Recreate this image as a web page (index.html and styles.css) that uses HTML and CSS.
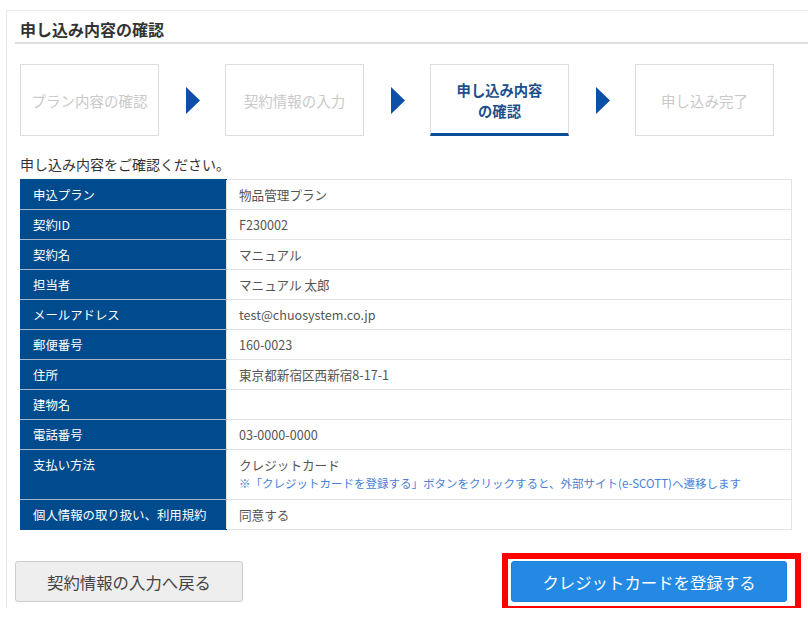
FILE: index.html
```html
<!DOCTYPE html>
<html lang="ja">
<head>
<meta charset="utf-8">
<title>申し込み内容の確認</title>
<link rel="stylesheet" href="styles.css">
</head>
<body>
<div class="panel">
  <h2 class="title">申し込み内容の確認</h2>
  <div class="steps">
    <div class="step">プラン内容の確認</div>
    <div class="arrow"><svg width="14" height="27" viewBox="0 0 14 27"><polygon points="0,0 14,13.5 0,27" fill="#0b4fa6"/></svg></div>
    <div class="step">契約情報の入力</div>
    <div class="arrow"><svg width="14" height="27" viewBox="0 0 14 27"><polygon points="0,0 14,13.5 0,27" fill="#0b4fa6"/></svg></div>
    <div class="step active">申し込み内容<br>の確認</div>
    <div class="arrow"><svg width="14" height="27" viewBox="0 0 14 27"><polygon points="0,0 14,13.5 0,27" fill="#0b4fa6"/></svg></div>
    <div class="step">申し込み完了</div>
  </div>
  <p class="intro">申し込み内容をご確認ください。</p>
  <table class="info">
    <tr><th>申込プラン</th><td>物品管理プラン</td></tr>
    <tr><th>契約ID</th><td>F230002</td></tr>
    <tr><th>契約名</th><td>マニュアル</td></tr>
    <tr><th>担当者</th><td>マニュアル 太郎</td></tr>
    <tr><th>メールアドレス</th><td>test@chuosystem.co.jp</td></tr>
    <tr><th>郵便番号</th><td>160-0023</td></tr>
    <tr><th>住所</th><td>東京都新宿区西新宿8-17-1</td></tr>
    <tr><th>建物名</th><td></td></tr>
    <tr><th>電話番号</th><td>03-0000-0000</td></tr>
    <tr class="tall"><th>支払い方法</th><td>クレジットカード<div class="note">※「クレジットカードを登録する」ボタンをクリックすると、外部サイト(e-SCOTT)へ遷移します</div></td></tr>
    <tr><th>個人情報の取り扱い、利用規約</th><td>同意する</td></tr>
  </table>
  <div class="actions">
    <button class="btn back">契約情報の入力へ戻る</button>
    <div class="highlight"><button class="btn primary">クレジットカードを登録する</button></div>
  </div>
</div>
</body>
</html>
```
FILE: styles.css
```css
html, body {
  margin: 0;
  padding: 0;
  background: #fff;
}
body {
  font-family: "Noto Sans CJK JP", "Noto Sans", sans-serif;
  color: #333;
  overflow: hidden;
}
.panel {
  margin: 10px 0 0 6px;
  height: 597px;
  border-left: 1px solid #e6e6e6;
  border-top: 1px solid #eeeeee;
  padding-left: 8px;
  box-sizing: content-box;
}
.title {
  margin: 0;
  padding: 8px 0 3px 5px;
  font-size: 16px;
  line-height: 20px;
  font-weight: bold;
  color: #333;
  border-bottom: 2px solid #dddddd;
}
.steps {
  display: flex;
  align-items: center;
  margin-top: 20px;
  padding-left: 5px;
}
.step {
  width: 139px;
  height: 72px;
  box-sizing: border-box;
  border: 1px solid #dddddd;
  display: flex;
  align-items: center;
  justify-content: center;
  text-align: center;
  font-size: 14.5px;
  color: #c9c9c9;
}
.step.active {
  color: #1b4f8c;
  font-weight: bold;
  font-size: 14.3px;
  line-height: 21px;
  border-bottom: 3px solid #0d4f96;
  padding-top: 2px;
}
.arrow {
  width: 66px;
  display: flex;
  justify-content: center;
  padding-left: 2px;
  box-sizing: border-box;
}
.arrow svg {
  display: block;
}
.intro {
  margin: 18px 0 5px 5px;
  font-size: 14px;
  line-height: 20px;
  color: #333;
}
.info {
  margin-left: 5px;
  width: 772px;
  border-collapse: collapse;
  font-size: 12.6px;
}
.info th, .info td {
  height: 29px;
  padding: 0 12px;
  line-height: 18px;
  text-align: left;
  vertical-align: middle;
}
.info th {
  width: 181px;
  background: #004b8d;
  color: #fff;
  font-weight: normal;
  font-size: 12.4px;
  border-top: 1px solid #a8b7c8;
  border-bottom: 1px solid #a8b7c8;
  border-left: 1px solid #004b8d;
}
.info td {
  color: #555;
  border: 1px solid #e3e3e3;
}
.info tr:first-child th {
  border-top-color: #004b8d;
}
.info tr:last-child th {
  border-bottom-color: #004b8d;
}
.info tr.tall th, .info tr.tall td {
  height: 43px;
  vertical-align: top;
  padding-top: 6px;
}
.note {
  font-size: 11.5px;
  line-height: 19px;
  color: #4a7fd6;
}
.actions {
  display: flex;
  justify-content: space-between;
  align-items: flex-start;
  margin-top: 23px;
  padding-right: 7px;
}
.btn {
  font-family: "Noto Sans CJK JP", "Noto Sans", sans-serif;
  font-size: 16.4px;
  border-radius: 3px;
  height: 41px;
  padding: 0;
  cursor: pointer;
}
.back {
  margin-top: 8px;
  width: 228px;
  background: #eeeeee;
  border: 1px solid #cccccc;
  color: #444;
}
.highlight {
  border: 6px solid #ff0000;
  padding: 2px 8px 4px 3px;
}
.primary {
  display: block;
  width: 276px;
  background: #2389e3;
  border: 1px solid #1d80d8;
  color: #fff;
}
```
